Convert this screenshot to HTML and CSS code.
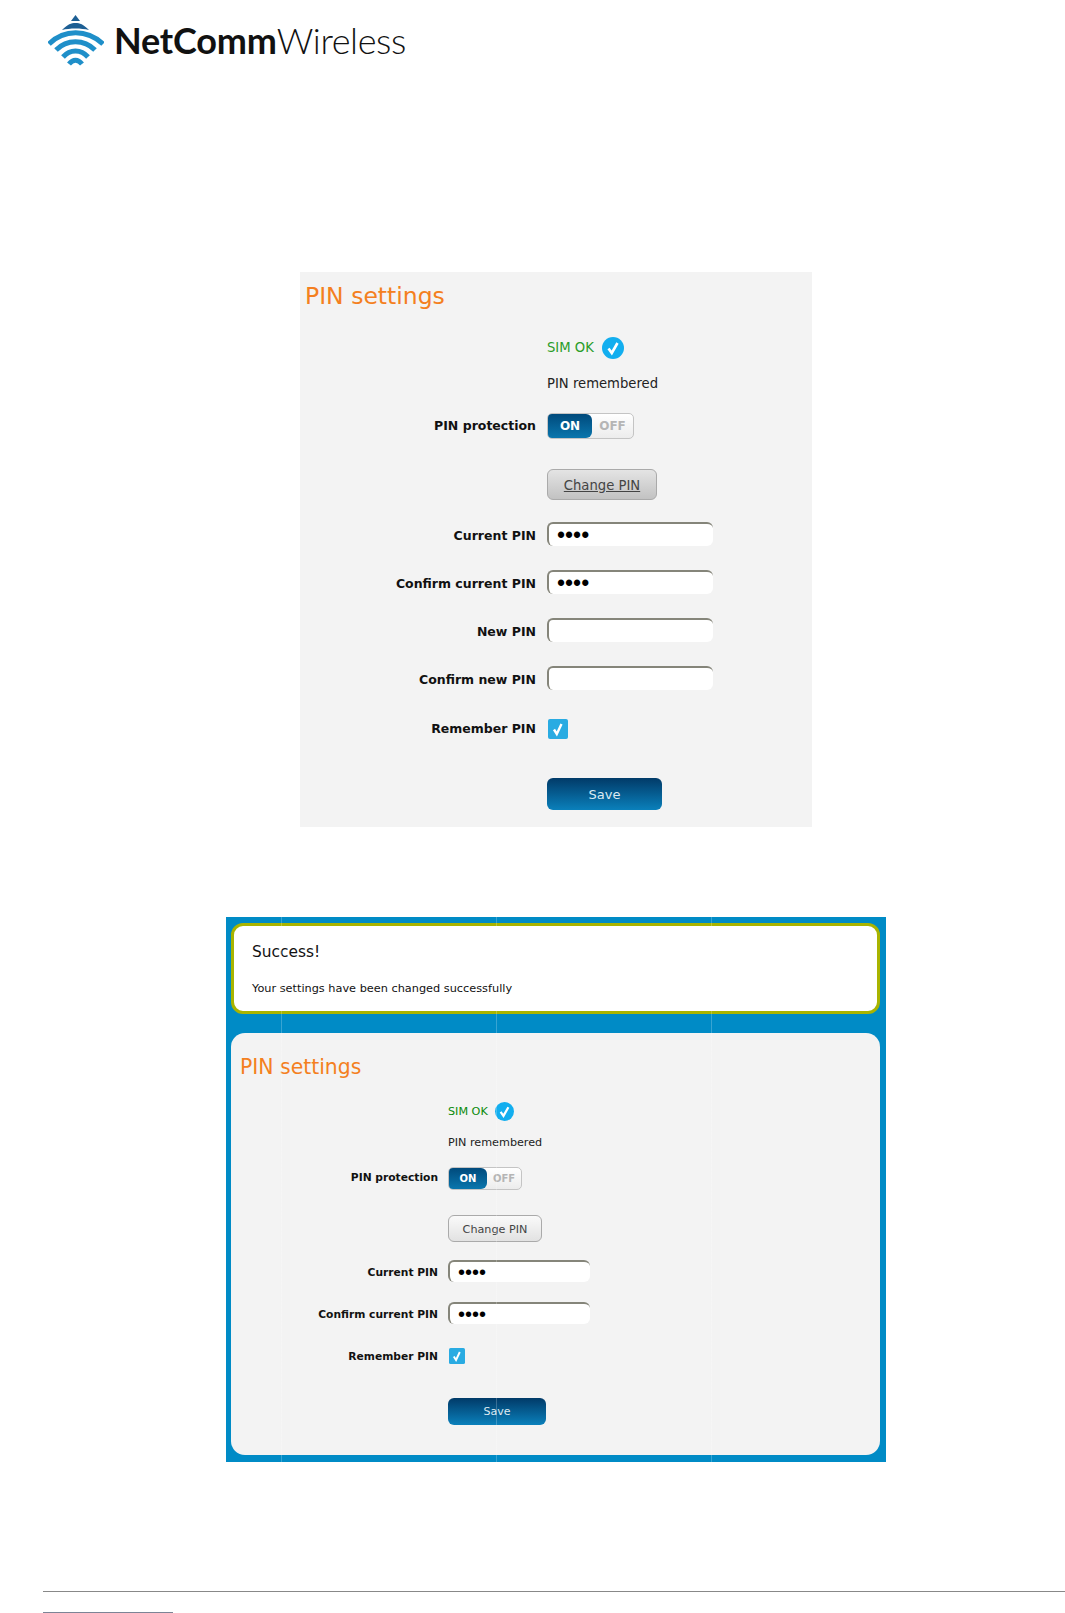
FILE: index.html
```html
<!DOCTYPE html>
<html lang="en">
<head>
    <meta charset="UTF-8">
    <title>PIN settings</title>
    <link rel="stylesheet" href="styles.css">
</head>
<body>
    <div class="header">
        <svg class="logo-icon" viewBox="0 0 56 52" width="56" height="52">
            <path d="M27.5 1 L32 7 L23 7 Z" fill="#1d5f94"/>
            <path d="M14 16 C20 10 23 9 27.5 9 C32 9 35 10 41 16 C33 14 22 14 14 16 Z" fill="#1d5f94"/>
            <path d="M1 30 C16 15 39 15 55 30" class="arc arc-wide"/>
            <path d="M8 36 C19 25 36 25 47 36" class="arc"/>
            <path d="M15 43 C22 35 33 35 40 43" class="arc"/>
            <path d="M21 50 C25 45 30 45 34 50" class="arc"/>
        </svg>
        <div class="logo-text"><b>NetComm</b>Wireless</div>
    </div>

    <form class="panel-large">
        <h2>PIN settings</h2>
        <div class="row row-status">
            <label></label>
            <span class="sim-ok">SIM OK</span>
            <svg class="tick-circle" viewBox="0 0 22 22"><circle cx="11" cy="11" r="11" fill="#12aeef"/><path d="M6.5 11.5 L9.8 16 L15.5 6" fill="none" stroke="#fff" stroke-width="2.6"/></svg>
        </div>
        <div class="row row-memo"><label></label><span>PIN remembered</span></div>
        <div class="row row-toggle">
            <label>PIN protection</label>
            <div class="toggle"><span class="toggle-on">ON</span><span class="toggle-off">OFF</span></div>
        </div>
        <div class="row row-change"><label></label><button type="button" class="btn-change"><u>Change PIN</u></button></div>
        <div class="row row-field"><label>Current PIN</label><input type="password" value="1234"></div>
        <div class="row row-field"><label>Confirm current PIN</label><input type="password" value="1234"></div>
        <div class="row row-field"><label>New PIN</label><input type="password"></div>
        <div class="row row-field"><label>Confirm new PIN</label><input type="password"></div>
        <div class="row row-check">
            <label>Remember PIN</label>
            <svg class="check-box" viewBox="0 0 20 20"><rect width="20" height="20" rx="2" fill="#29abe2"/><path d="M6 10.5 L8.8 15 L13.5 5" fill="none" stroke="#fff" stroke-width="2.4"/></svg>
        </div>
        <div class="row row-save"><label></label><button type="button" class="btn-save">Save</button></div>
    </form>

    <div class="panel-blue">
        <div class="success">
            <h3>Success!</h3>
            <p>Your settings have been changed successfully</p>
        </div>
        <form class="panel-small">
            <h2>PIN settings</h2>
            <div class="row row-status">
                <label></label>
                <span class="sim-ok">SIM OK</span>
                <svg class="tick-circle" viewBox="0 0 22 22"><circle cx="11" cy="11" r="11" fill="#12aeef"/><path d="M6.5 11.5 L9.8 16 L15.5 6" fill="none" stroke="#fff" stroke-width="2.6"/></svg>
            </div>
            <div class="row row-memo"><label></label><span>PIN remembered</span></div>
            <div class="row row-toggle">
                <label>PIN protection</label>
                <div class="toggle"><span class="toggle-on">ON</span><span class="toggle-off">OFF</span></div>
            </div>
            <div class="row row-change"><label></label><button type="button" class="btn-change">Change PIN</button></div>
            <div class="row row-field"><label>Current PIN</label><input type="password" value="1234"></div>
            <div class="row row-field"><label>Confirm current PIN</label><input type="password" value="1234"></div>
            <div class="row row-check">
                <label>Remember PIN</label>
                <svg class="check-box" viewBox="0 0 20 20"><rect width="20" height="20" rx="2" fill="#29abe2"/><path d="M6 10.5 L8.8 15 L13.5 5" fill="none" stroke="#fff" stroke-width="2.4"/></svg>
            </div>
            <div class="row row-save"><label></label><button type="button" class="btn-save">Save</button></div>
        </form>
    </div>

    <div class="footer">
        <div class="footnote-rule"></div>
    </div>
</body>
</html>
```

FILE: styles.css
```css
body {
    margin: 0;
    background: #fff;
    font-family: "DejaVu Sans", Verdana, sans-serif;
    color: #222;
}

/* header */
.header {
    display: flex;
    align-items: center;
    height: 80px;
    padding-left: 48px;
}
.logo-icon {
    flex: none;
}
.arc {
    fill: none;
    stroke: #1f8fc9;
    stroke-width: 5;
}
.arc-wide {
    stroke-width: 5;
}
.logo-text {
    margin-left: 10px;
    font-family: Lato, sans-serif;
    font-size: 36px;
    font-weight: 300;
    color: #111;
    letter-spacing: -0.4px;
}
.logo-text b {
    font-weight: 700;
    letter-spacing: -0.2px;
}

/* rows shared by both forms */
.row {
    display: flex;
    align-items: center;
}
.row label {
    flex: none;
    text-align: right;
    font-weight: bold;
    color: #111;
}
.row-field label {
    padding-top: 2px;
}
.row-toggle label {
    padding-bottom: 2px;
}
.row-status .sim-ok {
    padding-bottom: 2px;
}
h2 {
    margin: 0;
    font-weight: normal;
    color: #f47f20;
}
.sim-ok {
    color: #2a9d2a;
}
.tick-circle {
    flex: none;
}
.toggle {
    display: flex;
    box-sizing: border-box;
    border: 1px solid #c4c4c4;
    border-radius: 5px;
    overflow: hidden;
    background: linear-gradient(#fff, #ececec);
    font-weight: bold;
}
.toggle-on {
    display: flex;
    align-items: center;
    justify-content: center;
    color: #fff;
    background: linear-gradient(#004a7c, #0a76ad);
    border-radius: 0 6px 6px 0;
}
.toggle-off {
    flex: 1;
    display: flex;
    align-items: center;
    justify-content: center;
    color: #b5b5b5;
}
.btn-change {
    box-sizing: border-box;
    padding: 0;
    border: 1px solid #aaa;
    border-radius: 6px;
    color: #444;
    font-family: inherit;
}
.btn-save {
    box-sizing: border-box;
    padding: 0;
    border: 0;
    border-radius: 6px;
    color: #dceaf2;
    background: linear-gradient(#013a68, #0a80bb);
    font-family: inherit;
}
input {
    box-sizing: border-box;
    padding: 0 0 0 8px;
    border: 0;
    border-top: 2px solid #85857a;
    border-left: 2px solid #85857a;
    border-radius: 6px;
    background: #fff;
    font-family: "Liberation Sans", sans-serif;
    color: #000;
    outline: none;
}

/* first form, on the page */
.panel-large {
    width: 512px;
    height: 555px;
    box-sizing: border-box;
    margin: 192px 0 0 300px;
    padding-top: 9px;
    background: #f3f3f3;
    font-size: 13.2px;
}
.panel-large h2 {
    height: 30px;
    line-height: 30px;
    padding-left: 5px;
    font-size: 23.5px;
}
.panel-large .row label {
    width: 236px;
    margin-right: 11px;
    font-size: 12.5px;
}
.panel-large .row-status {
    height: 24px;
    margin-top: 25px;
}
.panel-large .tick-circle {
    width: 22px;
    height: 22px;
    margin-left: 8px;
}
.panel-large .row-memo {
    height: 24px;
    margin-top: 11px;
}
.panel-large .row-toggle {
    height: 26px;
    margin-top: 18px;
}
.panel-large .toggle {
    width: 87px;
    height: 26px;
    font-size: 12px;
}
.panel-large .toggle-on {
    width: 44px;
}
.panel-large .row-change {
    height: 31px;
    margin-top: 30px;
}
.panel-large .btn-change {
    width: 110px;
    height: 31px;
    padding-top: 1px;
    font-size: 13.2px;
    background: linear-gradient(#e4e4e4, #c2c2c2);
}
.panel-large .row-field {
    height: 24px;
    margin-top: 24px;
}
.panel-large .row-change + .row-field {
    margin-top: 22px;
}
.panel-large input {
    width: 166px;
    height: 24px;
    font-size: 23px;
}
.panel-large .row-check {
    height: 20px;
    margin-top: 29px;
}
.panel-large .row-check label {
    padding-bottom: 2px;
}
.panel-large .check-box {
    width: 20px;
    height: 20px;
    margin-left: 1px;
}
.panel-large .row-save {
    height: 32px;
    margin-top: 39px;
}
.panel-large .btn-save {
    width: 115px;
    height: 32px;
    font-size: 13px;
}

/* second screenshot, blue frame */
.panel-blue {
    position: relative;
    width: 660px;
    height: 545px;
    box-sizing: border-box;
    margin: 90px 0 0 226px;
    padding: 6px 6px 7px 5px;
    background: #008bc6;
}
/* the faint seams running down the frame */
.panel-blue::after {
    content: "";
    position: absolute;
    inset: 0;
    pointer-events: none;
    background:
        linear-gradient(rgba(255,255,255,.22), rgba(255,255,255,.22)) 55px 0 / 1px 100% no-repeat,
        linear-gradient(rgba(255,255,255,.22), rgba(255,255,255,.22)) 270px 0 / 1px 100% no-repeat,
        linear-gradient(rgba(255,255,255,.22), rgba(255,255,255,.22)) 485px 0 / 1px 100% no-repeat;
}
.success {
    height: 91px;
    box-sizing: border-box;
    padding: 16px 18px 0 18px;
    border: 3px solid #a9b400;
    border-radius: 12px;
    background: #fff;
    color: #111;
}
.success h3 {
    margin: 0;
    font-size: 15.4px;
    font-weight: normal;
    line-height: 20px;
}
.success p {
    margin: 19px 0 0;
    font-size: 11.3px;
    line-height: 16px;
}
.panel-small {
    height: 422px;
    box-sizing: border-box;
    margin-top: 19px;
    padding-top: 21px;
    border-radius: 14px;
    background: #f3f3f3;
    font-size: 11.2px;
}
.panel-small h2 {
    height: 26px;
    line-height: 26px;
    padding-left: 9px;
    font-size: 20.4px;
}
.panel-small .row label {
    width: 207px;
    margin-right: 10px;
    font-size: 10.7px;
}
.panel-small .sim-ok {
    color: #0a8a0a;
}
.panel-small .row-status {
    height: 20px;
    margin-top: 21px;
}
.panel-small .row-status .sim-ok {
    padding-bottom: 0;
}
.panel-small .tick-circle {
    width: 19px;
    height: 19px;
    margin-left: 7px;
}
.panel-small .row-memo {
    height: 20px;
    margin-top: 11px;
}
.panel-small .row-toggle {
    height: 23px;
    margin-top: 15px;
}
.panel-small .toggle {
    width: 74px;
    height: 23px;
    font-size: 10px;
}
.panel-small .toggle-on {
    width: 38px;
}
.panel-small .row-change {
    height: 27px;
    margin-top: 25px;
}
.panel-small .btn-change {
    width: 94px;
    height: 27px;
    padding-top: 2px;
    font-size: 11.2px;
    background: linear-gradient(#fafafa, #e2e2e2);
}
.panel-small .row-field {
    height: 22px;
    margin-top: 20px;
}
.panel-small .row-change + .row-field {
    margin-top: 18px;
}
.panel-small input {
    width: 142px;
    height: 22px;
    font-size: 20px;
}
.panel-small .row-check {
    height: 16px;
    margin-top: 24px;
}
.panel-small .check-box {
    width: 16px;
    height: 16px;
    margin-left: 1px;
}
.panel-small .row-save {
    height: 27px;
    margin-top: 34px;
}
.panel-small .btn-save {
    width: 98px;
    height: 27px;
    font-size: 11px;
}

/* footer rules */
.footer {
    margin: 129px 0 0 43px;
    border-top: 1px solid #888;
}
.footnote-rule {
    width: 130px;
    margin-top: 20px;
    border-top: 1px solid #7c8496;
}
```
